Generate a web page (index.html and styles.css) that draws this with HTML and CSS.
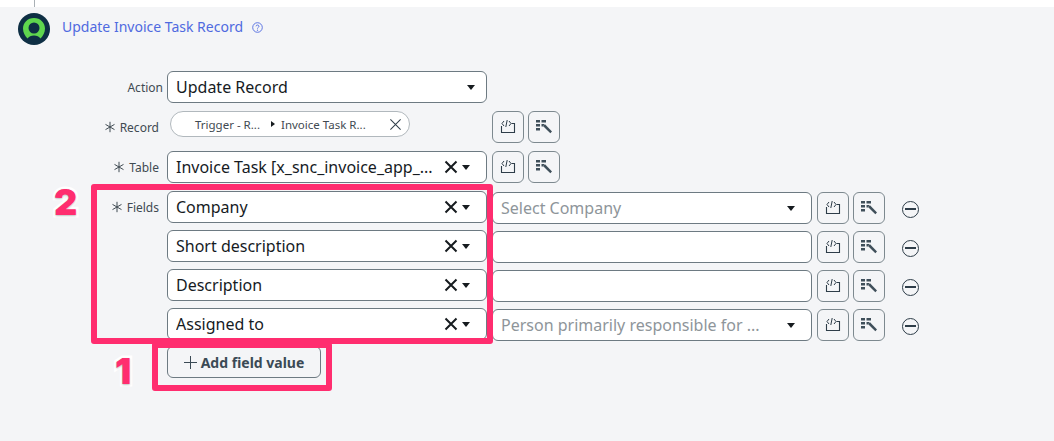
FILE: index.html
```html
<!DOCTYPE html>
<html>

<head>
	<title>Update Invoice Task Record</title>
	<link rel="stylesheet" href="styles.css">
</head>

<body>
	<svg width="0" height="0" class="defs">
		<symbol id="i-script" viewBox="0 0 18 18">
			<path d="M2.500 8V14.500H15.500V5.500H12.500" fill="none" stroke="#2e3d49" stroke-width="1.100"/>
			<path d="M5 3L3 5.500L5 8M10 3L12 5.500L10 8M8.200 2L6.800 9" fill="none" stroke="#2e3d49" stroke-width="1"/>
		</symbol>
		<symbol id="i-picker" viewBox="0 0 18 18">
			<path d="M1 2H5V4.500H1ZM6.500 2H11V4.500H6.500ZM1 6H5V8.500H1ZM1 10H5V12.500H1ZM6.500 6H9.500L8 8.500H6.500Z" fill="#3f4f5a"/>
			<path d="M8 8L10 6.300L17 13.500L15.300 15.300Z" fill="#3f4f5a"/>
		</symbol>
		<symbol id="i-x" viewBox="0 0 14 14">
			<path d="M1.500 1.500L12.500 12.500M12.500 1.500L1.500 12.500" fill="none" stroke="currentColor"/>
		</symbol>
		<symbol id="i-req" viewBox="0 0 12 12">
			<path d="M6 .8V11.200M1.500 3.400L10.500 8.600M10.500 3.400L1.500 8.600" fill="none" stroke="#3f4a52" stroke-width="1"/>
		</symbol>
	</svg>

	<div class="topstrip"><span class="topline"></span></div>

	<div class="header">
		<svg class="logo" width="32" height="32" viewBox="0 0 32 32">
			<circle cx="16" cy="16" r="16" fill="#0e2f44"/>
			<path d="M16 5C9.500 5 5 10 5 15.500C5 19.500 7 23 9.500 25.500C11 23.500 13 22.500 16 22.500C19 22.500 21 23.500 22.500 25.500C25 23 27 19.500 27 15.500C27 10 22.500 5 16 5Z" fill="#5fd64e"/>
			<circle cx="16" cy="15" r="5.500" fill="#0e2f44"/>
		</svg>
		<span class="title">Update Invoice Task Record</span>
		<svg class="help" width="11" height="11" viewBox="0 0 11 11">
			<circle cx="5.500" cy="5.500" r="4.800" fill="none" stroke="#4f6ae0" stroke-width=".9"/>
			<path d="M4 4.300C4 2.600 7 2.600 7 4.300C7 5.400 5.500 5.300 5.500 6.600" fill="none" stroke="#4f6ae0" stroke-width=".9"/>
			<circle cx="5.500" cy="8.200" r=".6" fill="#4f6ae0"/>
		</svg>
	</div>

	<div class="form">
		<div class="row">
			<label class="lbl plain">Action</label>
			<div class="select">
				<span class="val">Update Record</span>
				<span class="caret solo"></span>
			</div>
		</div>

		<div class="row">
			<label class="lbl"><svg class="req"><use href="#i-req"/></svg>Record</label>
			<div class="pillbox">
				<div class="pill">
					<span class="crumb">Trigger - R...</span>
					<span class="sep"></span>
					<span class="crumb2">Invoice Task R...</span>
					<svg class="pillx"><use href="#i-x"/></svg>
				</div>
			</div>
			<div class="tools">
				<button class="tool"><svg><use href="#i-script"/></svg></button>
				<button class="tool"><svg><use href="#i-picker"/></svg></button>
			</div>
		</div>

		<div class="row">
			<label class="lbl"><svg class="req"><use href="#i-req"/></svg>Table</label>
			<div class="select">
				<span class="val">Invoice Task [x_snc_invoice_app_...</span>
				<svg class="clear"><use href="#i-x"/></svg>
				<span class="caret"></span>
			</div>
			<div class="tools">
				<button class="tool"><svg><use href="#i-script"/></svg></button>
				<button class="tool"><svg><use href="#i-picker"/></svg></button>
			</div>
		</div>

		<div class="row first-field">
			<label class="lbl"><svg class="req"><use href="#i-req"/></svg>Fields</label>
			<div class="select">
				<span class="val">Company</span>
				<svg class="clear"><use href="#i-x"/></svg>
				<span class="caret"></span>
			</div>
			<div class="input">
				<span class="ph">Select Company</span>
				<span class="caret"></span>
			</div>
			<div class="tools">
				<button class="tool"><svg><use href="#i-script"/></svg></button>
				<button class="tool"><svg><use href="#i-picker"/></svg></button>
			</div>
			<span class="minus"></span>
		</div>

		<div class="row field">
			<span class="lbl"></span>
			<div class="select">
				<span class="val">Short description</span>
				<svg class="clear"><use href="#i-x"/></svg>
				<span class="caret"></span>
			</div>
			<div class="input"></div>
			<div class="tools">
				<button class="tool"><svg><use href="#i-script"/></svg></button>
				<button class="tool"><svg><use href="#i-picker"/></svg></button>
			</div>
			<span class="minus"></span>
		</div>

		<div class="row field">
			<span class="lbl"></span>
			<div class="select">
				<span class="val">Description</span>
				<svg class="clear"><use href="#i-x"/></svg>
				<span class="caret"></span>
			</div>
			<div class="input"></div>
			<div class="tools">
				<button class="tool"><svg><use href="#i-script"/></svg></button>
				<button class="tool"><svg><use href="#i-picker"/></svg></button>
			</div>
			<span class="minus"></span>
		</div>

		<div class="row field">
			<span class="lbl"></span>
			<div class="select">
				<span class="val">Assigned to</span>
				<svg class="clear"><use href="#i-x"/></svg>
				<span class="caret"></span>
			</div>
			<div class="input">
				<span class="ph">Person primarily responsible for ...</span>
				<span class="caret"></span>
			</div>
			<div class="tools">
				<button class="tool"><svg><use href="#i-script"/></svg></button>
				<button class="tool"><svg><use href="#i-picker"/></svg></button>
			</div>
			<span class="minus"></span>
		</div>

		<div class="row add-row">
			<span class="lbl"></span>
			<button class="add"><span class="plus"></span>Add field value</button>
		</div>
	</div>

	<!-- annotations drawn over the screenshot -->
	<div class="mark mark-fields"></div>
	<div class="mark mark-add"></div>
	<span class="num num-2">2</span>
	<span class="num num-1">1</span>
</body>

</html>
```

FILE: styles.css
```css
* {
	box-sizing: border-box;
}

body {
	margin: 0;
	height: 441px;
	overflow: hidden;
	position: relative;
	background-color: #f4f5f7;
	color: #161b1f;
	font-family: "Noto Sans", "Open Sans", sans-serif;
}

.defs {
	position: absolute;
}

.topstrip {
	height: 7px;
	background-color: #ffffff;
	padding-left: 34px;
}

.topline {
	display: block;
	width: 1px;
	height: 7px;
	background-color: #a9b0b5;
}

.header {
	display: flex;
	align-items: center;
	height: 32px;
	margin-top: 6px;
	padding-left: 18px;
}

.logo {
	flex: none;
}

.title {
	margin-left: 12px;
	font-size: 14px;
	color: #4f6ae0;
	position: relative;
	top: -3px;
}

.help {
	margin-left: 9px;
	position: relative;
	top: -2px;
}

.form {
	margin-top: 26px;
}

.row {
	display: flex;
	align-items: flex-start;
	height: 32px;
	margin-bottom: 8px;
}

.first-field {
	margin-top: 8px;
}

.field {
	margin-top: -1px;
}

.add-row {
	margin-top: -2px;
}

.first-field .tools,
.field .tools {
	margin-top: 1px;
}

.lbl {
	width: 163px;
	flex: none;
	height: 32px;
	display: flex;
	align-items: center;
	justify-content: flex-end;
	padding-right: 4px;
	font-size: 12px;
	color: #3f4a52;
}

.plain {
	padding-right: 0;
}

.req {
	width: 12px;
	height: 12px;
	margin-right: 4px;
}

.select {
	width: 320px;
	height: 32px;
	flex: none;
	margin-left: 4px;
	display: flex;
	align-items: center;
	padding: 0 8px;
	background-color: #ffffff;
	border: 1px solid #6d7a82;
	border-radius: 6px;
	font-size: 16px;
}

.val {
	flex: 1;
	white-space: nowrap;
	overflow: hidden;
}

.clear {
	width: 14px;
	height: 14px;
	flex: none;
	margin-right: 4px;
	color: #161b1f;
	stroke-width: 2px;
}

.caret {
	width: 0;
	height: 0;
	flex: none;
	margin-right: 8px;
	border-left: 4.500px solid transparent;
	border-right: 4.500px solid transparent;
	border-top: 5px solid #161b1f;
}

.solo {
	margin-right: 3px;
}

.pillbox {
	width: 320px;
	flex: none;
	margin-left: 4px;
	padding-left: 3px;
}

.pill {
	width: 240px;
	height: 26px;
	display: flex;
	align-items: center;
	background-color: #ffffff;
	border: 1px solid #b1b8bd;
	border-radius: 13px;
	font-size: 11.500px;
	color: #3f4a52;
	padding-left: 24px;
	white-space: nowrap;
}

.sep {
	width: 0;
	height: 0;
	margin: 0 6px 0 11px;
	border-top: 3.500px solid transparent;
	border-bottom: 3.500px solid transparent;
	border-left: 4px solid #161b1f;
}

.crumb2 {
	flex: 1;
}

.pillx {
	width: 13px;
	height: 13px;
	margin-right: 7px;
	color: #2e3d49;
	stroke-width: 1.100px;
}

.tools {
	display: flex;
	gap: 4px;
	margin-left: 5px;
	flex: none;
}

.tool {
	width: 32px;
	height: 32px;
	padding: 0;
	display: flex;
	align-items: center;
	justify-content: center;
	background-color: #f4f5f7;
	border: 1px solid #7d898f;
	border-radius: 6px;
}

.tool svg {
	width: 18px;
	height: 18px;
}

.input {
	width: 320px;
	height: 32px;
	flex: none;
	margin: 1px 0 0 5px;
	display: flex;
	align-items: center;
	padding: 0 8px;
	background-color: #ffffff;
	border: 1px solid #6d7a82;
	border-radius: 6px;
	font-size: 16px;
}

.ph {
	flex: 1;
	color: #8e959a;
	white-space: nowrap;
	overflow: hidden;
}

.minus {
	width: 17px;
	height: 17px;
	flex: none;
	margin: 10px 0 0 17px;
	border: 1.500px solid #2e3d49;
	border-radius: 50%;
	position: relative;
}

.minus::after {
	content: "";
	position: absolute;
	left: 2px;
	right: 2px;
	top: 6px;
	height: 2px;
	background-color: #2e3d49;
}

.add {
	margin-left: 4px;
	width: 154px;
	height: 32px;
	display: flex;
	align-items: center;
	justify-content: center;
	background-color: #f4f5f7;
	border: 1px solid #6d7a82;
	border-radius: 6px;
	font-family: inherit;
	font-size: 14px;
	font-weight: 700;
	color: #3b4a55;
}

.plus {
	width: 13px;
	height: 13px;
	margin-right: 4px;
	background:
		linear-gradient(#3b4a55, #3b4a55) center / 100% 1px no-repeat,
		linear-gradient(#3b4a55, #3b4a55) center / 1px 100% no-repeat;
}

.mark {
	position: absolute;
	border: 6px solid #ff2d6f;
	border-radius: 3px;
}

.mark-fields {
	left: 91px;
	top: 184px;
	width: 402px;
	height: 160px;
}

.mark-add {
	left: 152px;
	top: 342px;
	width: 180px;
	height: 49px;
}

.num {
	position: absolute;
	font-family: "Inter", "Roboto", sans-serif;
	font-weight: 900;
	font-size: 36px;
	line-height: 36px;
	color: #ff2d6f;
	-webkit-text-stroke: 5px #ffffff;
	paint-order: stroke fill;
	text-shadow: 0 1px 2px rgba(0, 0, 0, 0.25);
}

.num-2 {
	left: 54px;
	top: 184px;
}

.num-1 {
	left: 115px;
	top: 353px;
}
```
